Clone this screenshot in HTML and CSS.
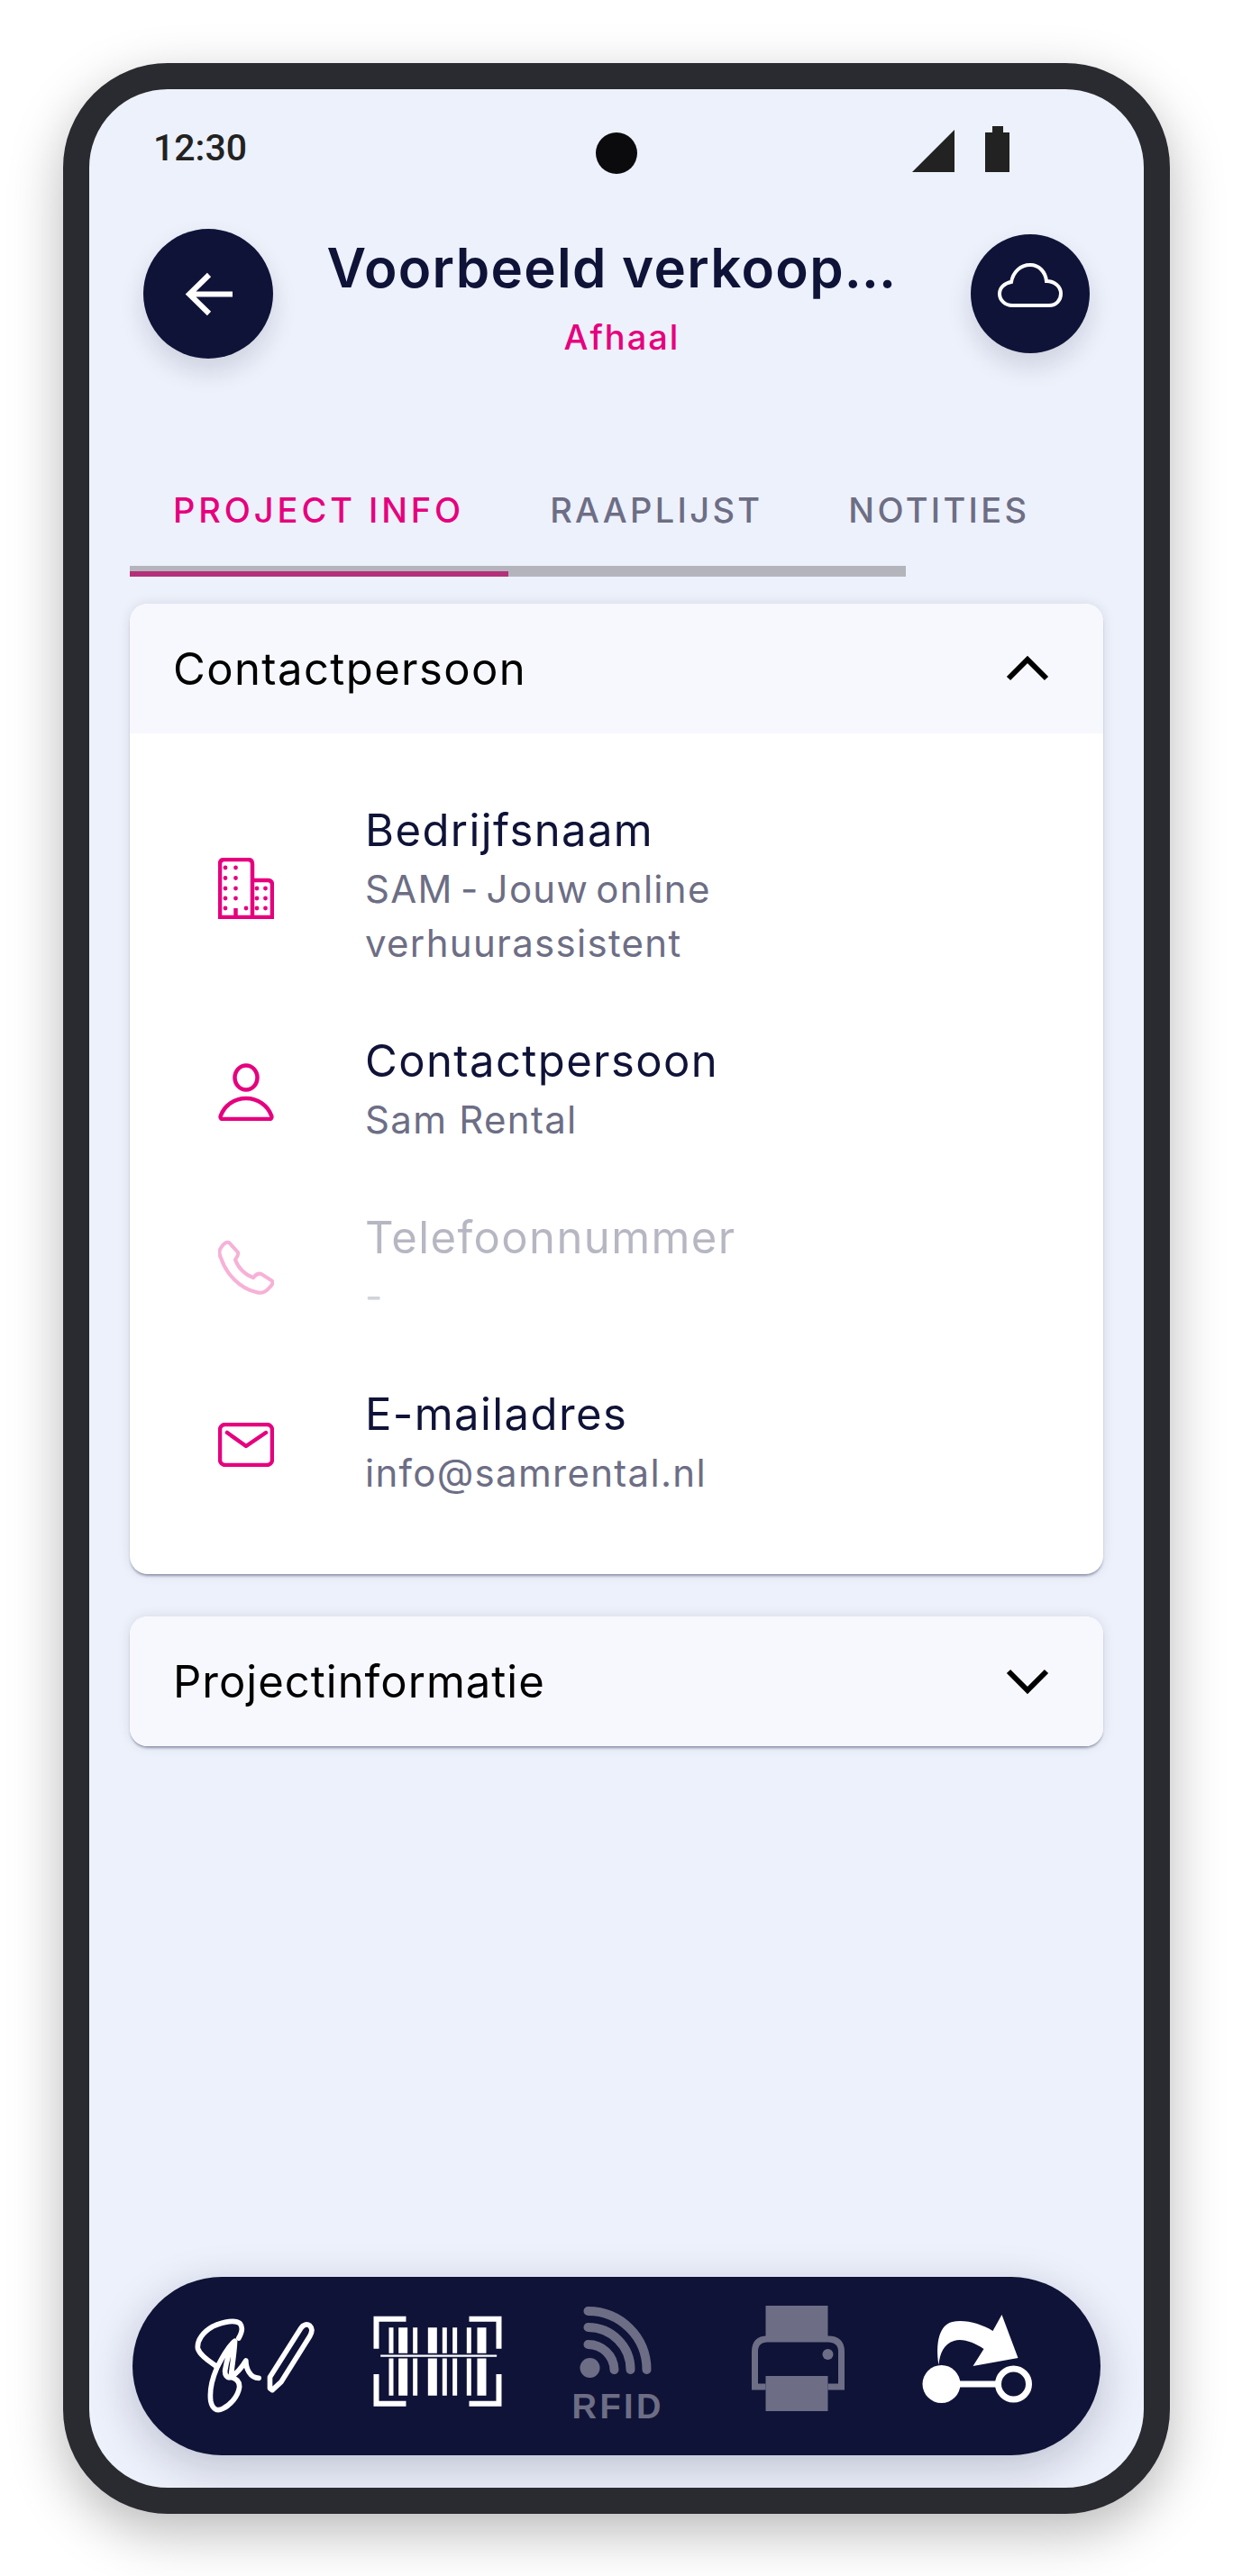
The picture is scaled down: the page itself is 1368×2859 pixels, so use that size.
FILE: index.html
```html
<!DOCTYPE html>
<html>
<head>
    <title>Voorbeeld verkoop</title>
    <link rel="stylesheet" href="styles.css">
</head>
<body>
    <div class="phone">
        <div class="screen">
            <div class="camera"></div>

            <div class="status">
                <span class="time">12:30</span>
                <div class="status-icons">
                    <svg width="47" height="47" viewBox="0 0 47 47"><path d="M47 0V47H0Z" fill="#222"/></svg>
                    <svg width="27" height="51" viewBox="0 0 27 51"><path d="M8 0H20V7H27V51H0V7H8Z" fill="#222"/></svg>
                </div>
            </div>

            <div class="header">
                <button class="round-btn back-btn">
                    <svg width="53" height="49" viewBox="0 0 53 49" fill="none" stroke="#fff" stroke-width="6"><path d="M53 24.5H6M27 3L5 24.5L27 46"/></svg>
                </button>
                <div class="header-text">
                    <h1 class="title">Voorbeeld verkoop…</h1>
                    <div class="subtitle">Afhaal</div>
                </div>
                <button class="round-btn cloud-btn">
                    <svg width="72" height="50" viewBox="0 0 72 50" fill="none" stroke="#fff" stroke-width="4"><path d="M16 47H57C65 47 70 41 70 34C70 26 63 20 54 20C53 10 46 2 36 2C25 2 17 10 15 21C8 22 2 27 2 34C2 41 8 47 16 47Z"/></svg>
                </button>
            </div>

            <div class="tabs">
                <span class="tab active">PROJECT INFO</span>
                <span class="tab">RAAPLIJST</span>
                <span class="tab">NOTITIES</span>
            </div>
            <div class="tab-track"><div class="tab-indicator"></div></div>

            <div class="card">
                <div class="card-head">
                    <span>Contactpersoon</span>
                    <svg width="48" height="30" viewBox="0 0 48 30" fill="none" stroke="#000" stroke-width="6"><path d="M3 26L24 5L45 26"/></svg>
                </div>
                <div class="card-body">
                    <div class="info-row">
                        <svg class="info-icon" width="62" height="68" viewBox="0 0 62 68" fill="none" stroke="#e6007e" stroke-width="4.5">
                            <path d="M2 66V7Q2 2 7 2H33Q38 2 38 7V66ZM38 25H55Q60 25 60 30V66H38M0 66H62M19.500 66V56"/>
                            <path d="M8 11H31M8 22.500H31M8 34H31M8 45H31M8 56H9M31 56H32" stroke-width="4.800" stroke-linecap="round" stroke-dasharray="0 11.500"/>
                            <path d="M43 34H53M43 45H53M43 56H53" stroke-width="4.800" stroke-linecap="round" stroke-dasharray="0 9.500"/>
                        </svg>
                        <div>
                            <div class="info-title">Bedrijfsnaam</div>
                            <div class="info-text"><span class="tight-words">SAM - Jouw online</span><br>verhuurassistent</div>
                        </div>
                    </div>
                    <div class="info-row">
                        <svg class="info-icon" width="62" height="64" viewBox="0 0 62 64" fill="none" stroke="#e6007e" stroke-width="4.5">
                            <ellipse cx="31" cy="16" rx="12.5" ry="13.5"/>
                            <path d="M5 62C3 62 2 60 3 58C7 47 18 39 31 39C44 39 55 47 59 58C60 60 59 62 57 62Z"/>
                        </svg>
                        <div>
                            <div class="info-title">Contactpersoon</div>
                            <div class="info-text">Sam Rental</div>
                        </div>
                    </div>
                    <div class="info-row disabled">
                        <svg class="info-icon" width="62" height="64" viewBox="0 0 62 64" fill="none" stroke="#e6007e" stroke-width="4">
                            <path d="M3 9C6 4 10 1 13 4L22 14C23 17 21 19 19 22C22 31 30 39 39 42C42 38 45 37 48 38L59 45C62 47 60 50 57 53C53 58 48 60 42 58C24 54 9 38 3 20C1 16 1 12 3 9Z"/>
                        </svg>
                        <div>
                            <div class="info-title">Telefoonnummer</div>
                            <div class="info-text">-</div>
                        </div>
                    </div>
                    <div class="info-row">
                        <svg class="info-icon" width="62" height="49" viewBox="0 0 62 49" fill="none" stroke="#e6007e" stroke-width="4.5">
                            <rect x="2" y="2" width="58" height="45" rx="6"/>
                            <path d="M10 11L31 26L53 11" stroke-linecap="round" stroke-linejoin="round"/>
                        </svg>
                        <div>
                            <div class="info-title">E-mailadres</div>
                            <div class="info-text">info@samrental.nl</div>
                        </div>
                    </div>
                </div>
            </div>

            <div class="card closed">
                <div class="card-head">
                    <span>Projectinformatie</span>
                    <svg width="48" height="30" viewBox="0 0 48 30" fill="none" stroke="#000" stroke-width="6"><path d="M3 4L24 25L45 4"/></svg>
                </div>
            </div>

            <div class="nav">
                <svg class="nav-icon" viewBox="185.500 2556 190 140" fill="none" stroke="#fff">
                    <g transform="translate(205 2560) scale(0.3333)" stroke-width="17" stroke-linecap="round" stroke-linejoin="round">
                        <path d="M178 105C188 88 194 70 182 56C168 44 130 48 92 66C60 84 38 112 42 140C50 165 85 185 105 200"/>
                        <path d="M165 115C145 130 125 165 105 205C90 240 80 280 85 315C90 340 105 350 125 340C150 328 175 300 180 270C182 252 172 240 152 235C140 240 130 228 133 210C138 180 150 140 165 118C164 150 155 205 152 235C172 222 190 200 202 180C202 205 215 238 245 238"/>
                        <path d="M282 235L385 72C392 60 405 56 415 64C424 72 422 86 414 100L320 250L290 278L282 272Z"/>
                    </g>
                </svg>
                <svg class="nav-icon" viewBox="386.500 2556 190 140">
                    <g transform="translate(405 2560) scale(0.3333)">
                        <path d="M135 41H36V140M345 41H444V140M135 323H36V225M345 323H444V225" fill="none" stroke="#fff" stroke-width="18"/>
                        <path d="M78 70h15v226h-15zM110 70h30v226h-30zM158 70h15v226h-15zM208 70h30v226h-30zM256 70h15v226h-15zM290 70h15v226h-15zM337 70h15v226h-15zM372 70h30v226h-30z" fill="#fff"/>
                        <path d="M50 164H437" stroke="#101338" stroke-width="17"/>
                        <path d="M50 164H437" stroke="#fff" stroke-width="7"/>
                    </g>
                </svg>
                <svg class="nav-icon" viewBox="587.500 2556 190 140">
                    <circle cx="654" cy="2628" r="11" fill="#6d6e85"/>
                    <path d="M652 2602A29 29 0 0 1 681 2630M652 2583A47 47 0 0 1 699 2630M652 2565A65 65 0 0 1 717 2630" fill="none" stroke="#6d6e85" stroke-width="10" stroke-linecap="round"/>
                    <text class="rfid" x="634" y="2684" textLength="99">RFID</text>
                </svg>
                <svg class="nav-icon" viewBox="788.500 2556 190 140">
                    <path d="M849 2559H918V2596H849ZM849 2637H918V2676H849Z" fill="#6d6e85"/>
                    <path d="M849 2649H837V2610Q837 2596 851 2596H918Q933 2596 933 2610V2649H918" fill="none" stroke="#6d6e85" stroke-width="7"/>
                    <ellipse cx="918" cy="2613" rx="6" ry="6" fill="#6d6e85"/>
                </svg>
                <svg class="nav-icon" viewBox="989.500 2556 190 140">
                    <circle cx="1044" cy="2646" r="21" fill="#fff"/>
                    <circle cx="1124" cy="2646" r="17" fill="none" stroke="#fff" stroke-width="7"/>
                    <path d="M1060 2646H1107" stroke="#fff" stroke-width="7"/>
                    <path d="M1041 2625C1037 2600 1042 2580 1056 2577C1070 2574 1088 2579 1101 2587L1111 2569L1129 2617L1079 2626L1091 2607C1080 2600 1068 2595 1058 2598C1047 2601 1042 2612 1041 2625Z" fill="#fff"/>
                </svg>
            </div>
        </div>
    </div>
</body>
</html>
```

FILE: styles.css
```css
body {
    margin: 0;
    min-height: 2859px;
    background-color: #fff;
    font-family: "Inter", "Noto Sans", sans-serif;
    color: #101338;
}

.phone {
    width: 1228px;
    height: 2720px;
    margin: 0 auto;
    position: relative;
    top: 70px;
    box-sizing: border-box;
    border: 29px solid #2a2b30;
    border-radius: 116px;
    background-color: #edf1fb;
    box-shadow: 0 20px 60px rgba(0, 0, 0, 0.28);
}

.screen {
    position: relative;
    display: flex;
    flex-direction: column;
    height: 100%;
    box-sizing: border-box;
    padding-bottom: 36px;
    border-radius: 87px;
    overflow: hidden;
}

.camera {
    position: absolute;
    top: 48px;
    left: 50%;
    width: 46px;
    height: 46px;
    margin-left: -23px;
    border-radius: 50%;
    background-color: #0b0b0d;
}

.status {
    display: flex;
    justify-content: space-between;
    align-items: flex-end;
    height: 51px;
    margin-top: 41px;
    padding: 0 149px 0 71px;
}

.time {
    font-family: "Roboto", sans-serif;
    font-size: 41px;
    font-weight: 500;
    line-height: 48px;
    color: #222;
    margin-bottom: 3px;
}

.status-icons {
    display: flex;
    align-items: flex-end;
    gap: 34px;
}

.status-icons svg {
    display: block;
}

.header {
    display: flex;
    align-items: center;
    height: 144px;
    margin-top: 63px;
    padding: 0 60px;
}

.round-btn {
    display: flex;
    align-items: center;
    justify-content: center;
    flex: none;
    padding: 0;
    border: none;
    border-radius: 50%;
    background-color: #101338;
    box-shadow: 0 14px 28px rgba(16, 19, 56, 0.14);
}

.back-btn {
    width: 144px;
    height: 144px;
}

.cloud-btn {
    width: 132px;
    height: 132px;
}

.cloud-btn svg {
    margin-bottom: 18px;
}

.header-text {
    flex: 1;
    padding-top: 7px;
    text-align: center;
}

.title {
    margin: 0 22px 0 0;
    font-size: 60px;
    font-weight: 600;
    line-height: 70px;
    letter-spacing: 1.3px;
    color: #101338;
}

.subtitle {
    margin-top: 19px;
    font-size: 38px;
    font-weight: 500;
    line-height: 46px;
    letter-spacing: 2px;
    color: #e6007e;
}

.tabs {
    display: flex;
    gap: 95px;
    margin-top: 138px;
    padding-left: 93px;
}

.tab {
    font-size: 38px;
    font-weight: 500;
    line-height: 60px;
    letter-spacing: 3.3px;
    color: #6d6e85;
}

.tab.active {
    letter-spacing: 3.9px;
    color: #e6007e;
}

.tab-track {
    display: flex;
    align-items: flex-end;
    width: 861px;
    height: 12px;
    margin: 32px 0 0 45px;
    background-color: #b4b5bc;
}

.tab-indicator {
    width: 420px;
    height: 6px;
    background-color: #b5307a;
}

.card {
    margin: 30px 45px 0;
    border-radius: 20px;
    background-color: #fff;
    box-shadow: 0 3px 3px -1px rgba(16, 19, 56, 0.4), 0 0 14px rgba(16, 19, 56, 0.1);
    overflow: hidden;
}

.card.closed {
    margin-top: 47px;
}

.card-head {
    display: flex;
    justify-content: space-between;
    align-items: center;
    height: 144px;
    padding: 0 60px 0 48px;
    background-color: #f7f8fd;
    font-size: 49px;
    letter-spacing: 1.4px;
    color: #000;
}

.card.closed .card-head {
    letter-spacing: 1px;
}

.card-body {
    display: flex;
    flex-direction: column;
    gap: 70px;
    padding: 77px 0 82px;
}

.info-row {
    display: flex;
    align-items: center;
    padding-left: 98px;
}

.info-row.disabled {
    opacity: 0.3;
}

.info-icon {
    flex: none;
    width: 62px;
    margin: 3px 101px 0 0;
}

.info-title {
    font-size: 49px;
    line-height: 62px;
    letter-spacing: 1.4px;
    color: #101338;
}

.info-text {
    margin-top: 4px;
    font-size: 42px;
    line-height: 60px;
    letter-spacing: 1.3px;
    color: #6d6e85;
}

.tight-words {
    word-spacing: -5px;
}

.nav {
    display: grid;
    grid-template-columns: repeat(5, 201px);
    align-items: center;
    height: 198px;
    margin: auto 48px 0;
    padding: 0 33px;
    box-sizing: border-box;
    border-radius: 99px;
    background-color: #101338;
    box-shadow: 0 14px 50px rgba(16, 19, 56, 0.22);
}

.nav-icon {
    display: block;
    width: 190px;
    height: 140px;
    margin: 0 auto;
}

.rfid {
    font-family: "Liberation Sans", sans-serif;
    font-size: 38px;
    font-weight: 700;
    fill: #6d6e85;
}
```
